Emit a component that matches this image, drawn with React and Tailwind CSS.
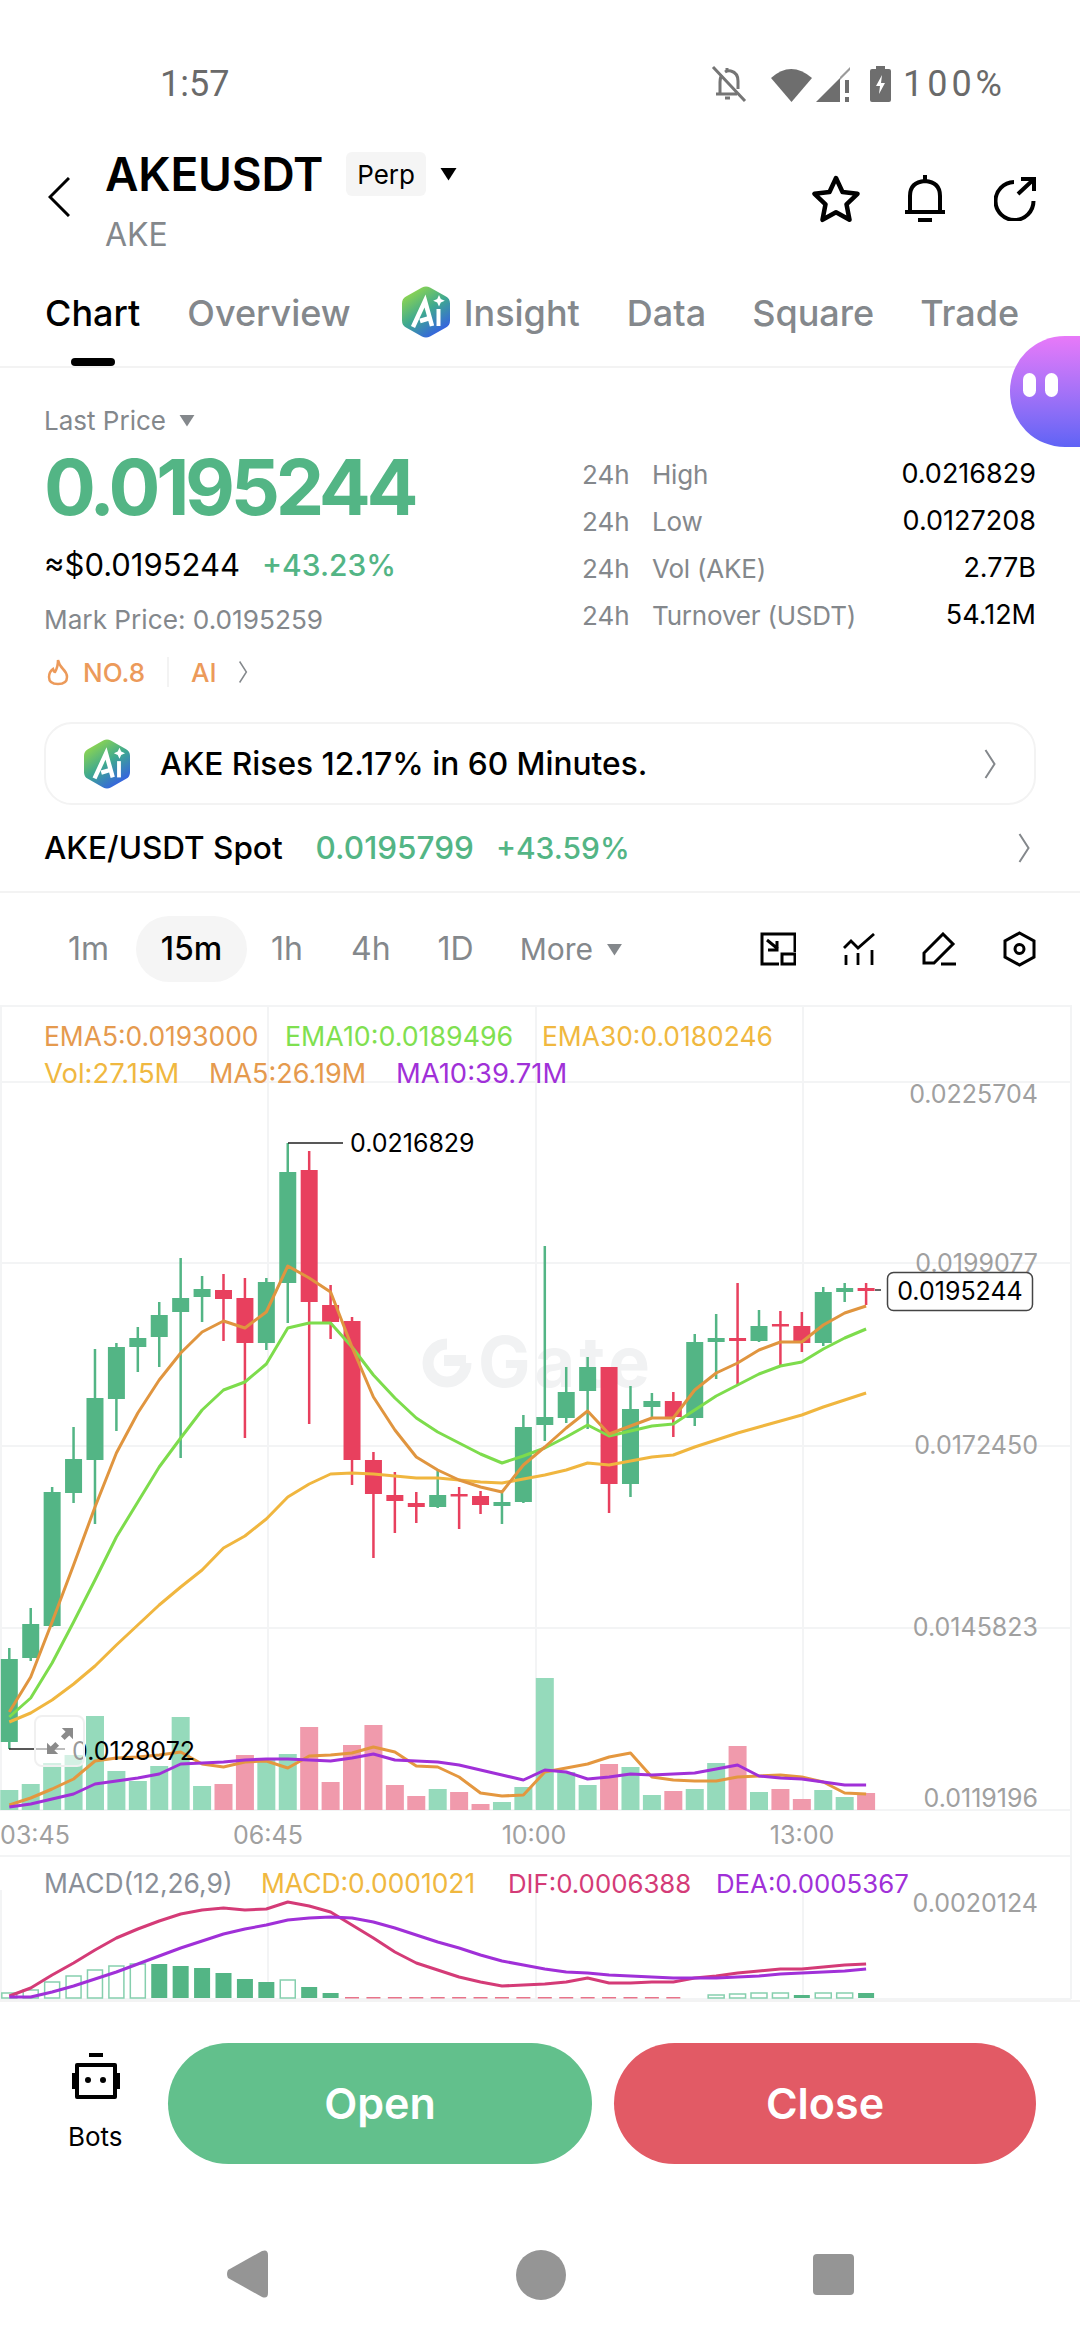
import React from "react";

const X = (i) => 9.3 + 21.42 * i;

// [high, bodyTop, bodyBottom, low, up]
const candles = [
  [1648, 1659, 1742, 1749, 1], [1608, 1624, 1658, 1661, 1], [1487, 1492, 1626, 1627, 1], [1427, 1459, 1493, 1503, 1],
  [1349, 1398, 1460, 1524, 1], [1343, 1347, 1399, 1431, 1], [1327, 1338, 1347, 1372, 1], [1302, 1315, 1337, 1367, 1],
  [1258, 1298, 1312, 1458, 1], [1276, 1289, 1297, 1322, 1], [1274, 1290, 1299, 1341, 0], [1278, 1298, 1343, 1438, 0],
  [1278, 1282, 1343, 1350, 1], [1143, 1172, 1283, 1323, 1], [1151, 1170, 1302, 1424, 0], [1285, 1305, 1322, 1339, 0],
  [1317, 1321, 1460, 1485, 0], [1452, 1460, 1494, 1558, 0], [1472, 1495, 1501, 1533, 0], [1492, 1503, 1507, 1523, 0],
  [1470, 1495, 1507, 1508, 1], [1487, 1494, 1496, 1529, 0], [1491, 1496, 1505, 1514, 0], [1493, 1502, 1506, 1524, 1],
  [1415, 1427, 1502, 1503, 1], [1246, 1417, 1425, 1441, 1], [1367, 1392, 1418, 1423, 1], [1357, 1367, 1391, 1429, 1],
  [1367, 1367, 1484, 1513, 0], [1386, 1409, 1484, 1497, 1], [1393, 1401, 1407, 1417, 1], [1392, 1401, 1417, 1437, 0],
  [1334, 1342, 1418, 1426, 1], [1314, 1338, 1342, 1379, 1], [1283, 1338, 1341, 1384, 0], [1310, 1326, 1341, 1342, 1],
  [1311, 1324, 1326, 1366, 0], [1312, 1326, 1343, 1352, 0], [1287, 1292, 1343, 1346, 1], [1283, 1288, 1292, 1302, 1],
  [1283, 1288, 1291, 1305, 0],
];

const ema5 = [1712, 1677, 1622, 1565, 1507, 1453, 1413, 1380, 1353, 1332, 1321, 1328, 1312, 1266, 1278, 1292, 1347, 1397, 1430, 1457, 1470, 1480, 1487, 1492, 1465, 1447, 1428, 1411, 1434, 1426, 1418, 1418, 1390, 1373, 1363, 1350, 1342, 1342, 1325, 1313, 1306];
const ema10 = [1717, 1698, 1663, 1622, 1580, 1537, 1502, 1467, 1438, 1410, 1390, 1382, 1364, 1328, 1323, 1323, 1347, 1375, 1398, 1418, 1432, 1443, 1454, 1463, 1456, 1448, 1437, 1425, 1436, 1431, 1426, 1424, 1410, 1396, 1385, 1374, 1366, 1362, 1349, 1338, 1329];
const ema30 = [1722, 1713, 1700, 1684, 1666, 1645, 1625, 1605, 1587, 1570, 1548, 1536, 1519, 1497, 1484, 1474, 1473, 1474, 1476, 1478, 1478, 1480, 1482, 1483, 1479, 1475, 1470, 1463, 1465, 1461, 1457, 1455, 1447, 1440, 1433, 1427, 1421, 1415, 1407, 1400, 1393];

// [top, up]
const volumes = [
  [1790, 1], [1784, 1], [1763, 1], [1755, 1], [1716, 1], [1771, 1], [1781, 1], [1766, 1], [1717, 1], [1786, 1],
  [1784, 0], [1755, 0], [1760, 1], [1754, 1], [1727, 0], [1782, 0], [1745, 0], [1725, 0], [1785, 0], [1796, 0],
  [1789, 1], [1792, 0], [1804, 0], [1802, 1], [1787, 1], [1678, 1], [1772, 1], [1785, 1], [1764, 0], [1767, 1],
  [1795, 1], [1791, 0], [1789, 1], [1763, 1], [1746, 0], [1792, 1], [1789, 0], [1799, 0], [1790, 1], [1797, 1], [1793, 0],
];
const volMa5 = [1805, 1798, 1789, 1779, 1761, 1758, 1757, 1755, 1752, 1764, 1767, 1762, 1761, 1768, 1756, 1755, 1753, 1747, 1752, 1766, 1767, 1777, 1793, 1796, 1795, 1772, 1768, 1764, 1757, 1753, 1777, 1780, 1781, 1781, 1777, 1776, 1775, 1777, 1782, 1793, 1794];
const volMa10 = [1807, 1804, 1799, 1794, 1784, 1781, 1778, 1774, 1764, 1763, 1762, 1760, 1759, 1759, 1760, 1761, 1758, 1754, 1760, 1761, 1762, 1765, 1770, 1775, 1780, 1770, 1772, 1779, 1777, 1774, 1775, 1774, 1773, 1769, 1765, 1776, 1778, 1779, 1782, 1785, 1785];

// [top, solid]
const macdBars = [
  [1993, 0], [1990, 0], [1982, 0], [1976, 0], [1970, 0], [1966, 0], [1964, 0], [1964, 1], [1966, 1], [1968, 1],
  [1973, 1], [1979, 1], [1982, 1], [1980, 0], [1987, 1], [1993, 1],
];
const macdTail = [[1995, 0], [1994, 0], [1993, 0], [1993, 0], [1995, 1], [1993, 0], [1993, 0], [1993, 1]];
const dif = [1996, 1988, 1975, 1963, 1950, 1938, 1929, 1921, 1914, 1910, 1908, 1910, 1909, 1902, 1906, 1912, 1925, 1938, 1952, 1963, 1970, 1977, 1982, 1986, 1985, 1984, 1982, 1978, 1983, 1983, 1982, 1982, 1978, 1976, 1973, 1971, 1969, 1969, 1967, 1965, 1964];
const dea = [1997, 1997, 1992, 1986, 1979, 1972, 1964, 1956, 1948, 1941, 1934, 1929, 1925, 1920, 1918, 1917, 1918, 1922, 1928, 1935, 1942, 1948, 1955, 1961, 1965, 1969, 1972, 1973, 1975, 1976, 1977, 1978, 1978, 1978, 1977, 1976, 1974, 1973, 1972, 1971, 1969];

const pts = (arr) => arr.map((y, i) => `${X(i).toFixed(1)},${y}`).join(" ");

function Line({ data, color, width = 3 }) {
  return <polyline points={pts(data)} fill="none" stroke={color} strokeWidth={width} strokeLinejoin="round" />;
}

function Caret({ className }) {
  return (
    <svg className={className} viewBox="0 0 18 14">
      <path d="M1 1h16L9 13.5z" fill="currentColor" />
    </svg>
  );
}

function Chevron({ className }) {
  return (
    <svg className={className} viewBox="0 0 12 32" fill="none" stroke="currentColor" strokeWidth="2">
      <path d="M1.5 2l9 14-9 14" />
    </svg>
  );
}

function AiBadge({ id, className }) {
  return (
    <svg className={className} viewBox="0 0 48 52">
      <defs>
        <linearGradient id={id} x1="0.15" y1="0.1" x2="0.7" y2="0.95">
          <stop offset="0" stopColor="#8fd64f" />
          <stop offset="0.5" stopColor="#3fa98f" />
          <stop offset="1" stopColor="#3563e0" />
        </linearGradient>
      </defs>
      <path d="M20 1.5q4-2 8 0l16 9q4 2 4 7v17q0 5-4 7l-16 9q-4 2-8 0l-16-9q-4-2-4-7v-17q0-5 4-7z" fill={`url(#${id})`} />
      <path d="M11 41L23 15l7 25M18 35l10-3" fill="none" stroke="#fff" strokeWidth="4.500" />
      <path d="M36.500 23v17" fill="none" stroke="#fff" strokeWidth="4" />
      <path d="M37 9l1.800 4 4 1.800-4 1.800-1.800 4-1.800-4-4-1.800 4-1.800z" fill="#fff" />
    </svg>
  );
}

function StatusBar() {
  return (
    <div className="h-[125px] flex items-end justify-between pl-[160px] pr-[74px] pb-[21px] text-[#6a6a6a]">
      <span className="text-[36px] leading-[40px] font-['Roboto',sans-serif]">1:57</span>
      <div className="flex items-center">
        <svg className="w-[36px] h-[38px] mr-[24px]" viewBox="0 0 36 38" fill="none" stroke="#757575" strokeWidth="3">
          <path d="M9 28V17q0-5 2-7M14 7q3-2 6-1 7 2 7 10v8" />
          <path d="M5 29h21M16 3v3M14 33h5M2 2l32 34" />
        </svg>
        <svg className="w-[41px] h-[35px] mr-[4px]" viewBox="0 0 41 35">
          <path d="M0 11Q20-7 41 11L20.500 35z" fill="#6e6e6e" />
        </svg>
        <svg className="w-[34px] h-[35px] mr-[20px]" viewBox="0 0 34 35">
          <path d="M0 35L24 11v24z" fill="#6e6e6e" />
          <path d="M24 10L34 0v3l-10 10z" fill="#9a9a9a" />
          <path d="M29 13h4v13h-4zM29 30h4v5h-4z" fill="#6e6e6e" />
        </svg>
        <svg className="w-[21px] h-[36px] mr-[12px]" viewBox="0 0 21 36">
          <path d="M6 0h9v3h4q2 0 2 2v29q0 2-2 2H2q-2 0-2-2V5q0-2 2-2h4z" fill="#6e6e6e" />
          <path d="M12 9l-6 11h4l-1 8 6-11h-4z" fill="#fff" />
        </svg>
        <span className="text-[36px] leading-[40px] tracking-[4px] font-['Roboto',sans-serif]">100%</span>
      </div>
    </div>
  );
}

function Header() {
  return (
    <div className="h-[137px] flex pl-[48px] pr-[44px]">
      <svg className="w-[22px] h-[40px] mt-[52px] mr-[35px] shrink-0" viewBox="0 0 22 40" fill="none" stroke="#000" strokeWidth="3">
        <path d="M21 1L2 20l19 19" />
      </svg>
      <div className="flex-1 pt-[24px]">
        <div className="flex items-center h-[50px]">
          <span className="text-[46px] leading-[50px] font-semibold text-black tracking-[-0.2px]">AKEUSDT</span>
          <span className="ml-[23px] px-[11px] h-[44px] flex items-center bg-[#f5f5f5] rounded-[6px] text-[26px]">Perp</span>
          <Caret className="w-[19px] h-[14px] ml-[13px] text-black" />
        </div>
        <div className="mt-[18px] text-[32px] leading-[36px] text-[#84888c]">AKE</div>
      </div>
      <div className="flex items-center pt-[10px]">
        <svg className="w-[48px] h-[48px]" viewBox="0 0 48 48" fill="none" stroke="#000" strokeWidth="4.500" strokeLinejoin="round">
          <path d="M24 3l6.500 14 15 1.800-11 10.500 3 15.500L24 37.200 10.500 44.800l3-15.500-11-10.500 15-1.800z" />
        </svg>
        <svg className="w-[40px] h-[48px] ml-[45px]" viewBox="0 0 40 48" fill="none" stroke="#000" strokeWidth="4">
          <path d="M5 36V21Q5 7 20 6q15 1 15 15v15M0 37h40" />
          <path d="M20 0v6M13 45h14" />
        </svg>
        <svg className="w-[42px] h-[44px] ml-[49px]" viewBox="0 0 42 44" fill="none" stroke="#000" strokeWidth="4">
          <path d="M20 5A19 19 0 1 0 39.500 24" />
          <path d="M24 17L39 3M27 2h13v12" />
        </svg>
      </div>
    </div>
  );
}

function Tabs() {
  return (
    <div className="h-[106px] border-b-[2px] border-[#f3f3f3] relative flex items-start pl-[45px] pt-[29px] text-[36px] leading-[44px] text-[#84888c] font-medium">
      <span className="text-black">Chart</span>
      <span className="ml-[47px]">Overview</span>
      <AiBadge id="tabAi" className="w-[48px] h-[52px] ml-[51px] -mt-[5px] shrink-0" />
      <span className="ml-[14px]">Insight</span>
      <span className="ml-[47px]">Data</span>
      <span className="ml-[46px]">Square</span>
      <span className="ml-[46px]">Trade</span>
      <div className="absolute left-[71px] bottom-0 w-[44px] h-[8px] bg-black rounded-full" />
    </div>
  );
}

function Stat({ label, value }) {
  return (
    <div className="h-[47px] flex items-center text-[26px]">
      <span className="w-[70px] text-[#84888c]">24h</span>
      <span className="text-[#84888c] tracking-[-0.2px]">{label}</span>
      <span className="ml-auto text-black text-[27px]">{value}</span>
    </div>
  );
}

function PriceInfo() {
  return (
    <div className="h-[525px] px-[44px] border-b-[2px] border-[#f3f3f3]">
      <div className="h-[339px] flex">
        <div className="w-[538px]">
          <div className="flex items-center mt-[36px] h-[32px] text-[26px] text-[#84888c]">
            Last Price
            <Caret className="w-[18px] h-[13px] ml-[12px] text-[#84888c]" />
          </div>
          <div className="mt-[16px] h-[70px] text-[77px] leading-[70px] font-bold text-[#53b585] tracking-[-4.3px]">0.0195244</div>
          <div className="mt-[21px] h-[44px] flex items-center text-[31px]">
            <span className="text-black">≈$0.0195244</span>
            <span className="ml-[22px] text-[30px] text-[#53b585] font-medium">+43.23%</span>
          </div>
          <div className="mt-[13px] text-[26.2px] leading-[40px] text-[#84888c]">Mark Price: 0.0195259</div>
          <div className="mt-[14px] h-[36px] flex items-center text-[26px] font-medium text-[#ec9a5a]">
            <svg className="w-[22px] h-[28px] ml-[3px] mr-[14px]" viewBox="0 0 22 28" fill="none" stroke="#ec9a5a" strokeWidth="2.500">
              <path d="M11 2q1 5 5 9 4 4 4 8 0 7-9 7t-9-7q0-5 4-8 1 3 2 3 3-5 3-12z" />
            </svg>
            <span>NO.8</span>
            <div className="w-[2px] h-[30px] bg-[#f3f3f3] ml-[22px] mr-[22px]" />
            <span>AI</span>
            <Chevron className="w-[12px] h-[24px] ml-[20px] text-[#84888c]" />
          </div>
        </div>
        <div className="flex-1 pt-[83px]">
          <Stat label="High" value="0.0216829" />
          <Stat label="Low" value="0.0127208" />
          <Stat label="Vol (AKE)" value="2.77B" />
          <Stat label="Turnover (USDT)" value="54.12M" />
        </div>
      </div>
      <div className="mt-[15px] h-[83px] border-[2px] border-[#f3f3f3] rounded-[28px] flex items-center pl-[38px] pr-[38px]">
        <AiBadge id="bannerAi" className="w-[46px] h-[50px] shrink-0" />
        <span className="ml-[30px] text-[31.7px] font-medium text-black">AKE Rises 12.17% in 60 Minutes.</span>
        <Chevron className="w-[12px] h-[32px] ml-auto text-[#84888c]" />
      </div>
      <div className="h-[86px] flex items-center text-[31.5px] font-medium">
        <span className="text-black">AKE/USDT Spot</span>
        <span className="ml-[33px] text-[#53b585]">0.0195799</span>
        <span className="ml-[22px] text-[30px] text-[#53b585]">+43.59%</span>
        <Chevron className="w-[12px] h-[32px] ml-auto mr-[6px] text-[#84888c]" />
      </div>
    </div>
  );
}

function Intervals() {
  return (
    <div className="h-[112px] flex items-center pl-[68px] pr-[44px] text-[32px] text-[#84888c]">
      <span>1m</span>
      <span className="ml-[27px] w-[111px] h-[66px] rounded-full bg-[#f5f5f5] text-black font-medium flex items-center justify-center">15m</span>
      <span className="ml-[24px]">1h</span>
      <span className="ml-[48px]">4h</span>
      <span className="ml-[47px]">1D</span>
      <span className="ml-[46px] text-[30px]">More</span>
      <Caret className="w-[17px] h-[13px] ml-[13px] text-[#84888c]" />
      <div className="ml-auto flex items-center gap-[47px] text-black">
        <svg className="w-[36px] h-[34px]" viewBox="0 0 36 34" fill="none" stroke="#000" strokeWidth="3">
          <path d="M19 32H2V2h33v18M7 8l11 9M17 9v9H8" />
          <path d="M22 22h13v10H22z" />
        </svg>
        <svg className="w-[32px] h-[32px]" viewBox="0 0 32 32" fill="none" stroke="#000" strokeWidth="2.800">
          <path d="M1 15l7-7 7 7L31 1M3 22v10M15 20v12M29 17v15" />
        </svg>
        <svg className="w-[34px] h-[34px]" viewBox="0 0 34 34" fill="none" stroke="#000" strokeWidth="3">
          <path d="M21 2l10 10-19 19H2V21zM19 32h15" />
        </svg>
        <svg className="w-[33px] h-[36px]" viewBox="0 0 33 36" fill="none" stroke="#000" strokeWidth="3">
          <path d="M16.500 2L31 10v16l-14.500 8L2 26V10z" />
          <circle cx="16.500" cy="18" r="4.500" />
        </svg>
      </div>
    </div>
  );
}

function Chart() {
  const t = { fontSize: 25 };
  return (
    <div className="relative h-[995px] overflow-hidden">
      <svg className="block font-['Inter',sans-serif]" width="1080" height="995" viewBox="0 1005 1080 995">
        {/* grid */}
        <g stroke="#f3f4f5" strokeWidth="2">
          <path d="M0 1006H1071M0 1082H1071M0 1263H1071M0 1446H1071M0 1628H1071M0 1810H1071M0 1856H1071M0 1999H1071" />
          <path d="M1 1005V1810M268 1005V1810M536 1005V1810M803 1005V1810M1071 1005V1999" />
          <path d="M1 1890V1999M268 1890V1999M536 1890V1999M803 1890V1999" />
        </g>

        {/* watermark */}
        <g fill="none" stroke="#f1f2f3" strokeWidth="11">
          <path d="M447 1344A19 19 0 1 0 466 1363" />
        </g>
        <rect x="444" y="1355" width="22" height="11" fill="#f1f2f3" />
        <text x="478" y="1387" fill="#f1f2f3" fontSize="70" fontWeight="700" letterSpacing="4">Gate</text>

        {/* volume */}
        {volumes.map(([top, up], i) => (
          <rect key={i} x={X(i) - 9} y={top} width="18" height={1810 - top} fill={up ? "#95dabb" : "#f09aac"} />
        ))}
        <Line data={volMa5} color="#e4973f" />
        <Line data={volMa10} color="#a030d8" />

        {/* candles */}
        {candles.map(([h, top, bottom, l, up], i) => {
          const c = up ? "#53b585" : "#e8405e";
          return (
            <g key={i} fill={c}>
              <rect x={X(i) - 1.25} y={h} width="2.5" height={l - h} />
              <rect x={X(i) - 8.5} y={top} width="17" height={Math.max(bottom - top, 2.5)} />
            </g>
          );
        })}
        <Line data={ema30} color="#f0b63f" />
        <Line data={ema10} color="#7ddc4c" />
        <Line data={ema5} color="#e0953f" />

        {/* high / low markers */}
        <path d="M288 1143H343M9 1749H65" fill="none" stroke="#222" strokeWidth="1.500" />
        <text x="350" y="1152" fill="#000" {...t}>0.0216829</text>
        <text x="72" y="1760" fill="#000" {...t}>0.0128072</text>

        {/* price axis */}
        <g fill="#a0a0a0" textAnchor="end" {...t}>
          <text x="1038" y="1103">0.0225704</text>
          <text x="1038" y="1272">0.0199077</text>
          <text x="1038" y="1454">0.0172450</text>
          <text x="1038" y="1636">0.0145823</text>
          <text x="1038" y="1807">0.0119196</text>
          <text x="1038" y="1912">0.0020124</text>
        </g>

        {/* last price tag */}
        <path d="M875 1290H881" stroke="#333" strokeWidth="1.500" />
        <rect x="887.500" y="1272.500" width="145" height="38" rx="6" fill="#fff" stroke="#444" strokeWidth="1.500" />
        <text x="960" y="1300" textAnchor="middle" fill="#000" {...t}>0.0195244</text>

        {/* time axis */}
        <g fill="#a0a0a0" textAnchor="middle" {...t}>
          <text x="35" y="1844">03:45</text>
          <text x="268" y="1844">06:45</text>
          <text x="534" y="1844">10:00</text>
          <text x="802" y="1844">13:00</text>
        </g>

        {/* legends */}
        <g fontSize="26.4">
          <text x="44" y="1046" fill="#e59a4e">EMA5:0.0193000</text>
          <text x="285" y="1046" fill="#7fe050" fontSize="26.8">EMA10:0.0189496</text>
          <text x="542" y="1046" fill="#f0b840">EMA30:0.0180246</text>
          <text x="44" y="1083" fill="#f0b840" fontSize="27.4">Vol:27.15M</text>
          <text x="209" y="1083" fill="#e59a4e" fontSize="27">MA5:26.19M</text>
          <text x="396" y="1083" fill="#a030d8" fontSize="27.4">MA10:39.71M</text>
          <text x="44" y="1893" fill="#8a8f98">MACD(12,26,9)</text>
          <text x="261" y="1893" fill="#f0b840">MACD:0.0001021</text>
          <text x="508" y="1893" fill="#d43b77" fontSize="25.8">DIF:0.0006388</text>
          <text x="716" y="1893" fill="#a030d8" fontSize="25.8">DEA:0.0005367</text>
        </g>

        {/* macd */}
        {macdBars.map(([top, solid], i) =>
          solid ? (
            <rect key={i} x={X(i) - 8} y={top} width="16" height={1998 - top} fill="#53b585" />
          ) : (
            <rect key={i} x={X(i) - 7.5} y={top} width="15" height={1998 - top} fill="#fff" stroke="#86cfae" strokeWidth="1.500" />
          )
        )}
        {Array.from({ length: 16 }, (_, k) => (
          <rect key={k} x={X(k + 16) - 7} y="1997" width="14" height="1.500" fill="#e8738a" />
        ))}
        {macdTail.map(([top, solid], k) =>
          solid ? (
            <rect key={k} x={X(k + 33) - 8} y={top} width="16" height={1998 - top} fill="#53b585" />
          ) : (
            <rect key={k} x={X(k + 33) - 8} y={top} width="16" height={1998 - top} fill="#fff" stroke="#86cfae" strokeWidth="1.500" />
          )
        )}
        <Line data={dif} color="#d43b77" />
        <Line data={dea} color="#a030d8" />
      </svg>

      {/* reset zoom button */}
      <div className="absolute left-[34px] top-[710px] w-[51px] h-[52px] rounded-[8px] border-[2px] border-[#f0f0f0] bg-white/60 flex items-center justify-center">
        <svg className="w-[26px] h-[26px]" viewBox="0 0 28 28" fill="#8a8a8a">
          <path d="M28 0v12l-4-4-5 5-4-4 5-5-4-4zM0 28V16l4 4 5-5 4 4-5 5 4 4z" />
        </svg>
      </div>
    </div>
  );
}

function BottomBar() {
  return (
    <div className="h-[160px] flex items-start pl-[64px] pr-[44px] pt-[41px]">
      <div className="w-[104px] shrink-0 pl-[4px] flex flex-col">
        <svg className="w-[48px] h-[46px] ml-[4px] mt-[10px]" viewBox="0 0 48 46" fill="none" stroke="#000" strokeWidth="4">
          <path d="M5 12h38v32H5z" strokeLinejoin="round" />
          <path d="M17 2h14M2 20v16M46 20v16" />
          <circle cx="16" cy="27" r="3" fill="#000" stroke="none" />
          <circle cx="31" cy="27" r="3" fill="#000" stroke="none" />
        </svg>
        <span className="mt-[22px] text-[26px] leading-[32px] text-black">Bots</span>
      </div>
      <div className="w-[424px] h-[121px] rounded-full bg-[#62c08c] text-white text-[43px] font-semibold flex items-center justify-center">Open</div>
      <div className="ml-[22px] w-[422px] h-[121px] rounded-full bg-[#e25a65] text-white text-[43px] font-semibold flex items-center justify-center">Close</div>
    </div>
  );
}

function NavBar() {
  return (
    <div className="flex-1 relative flex items-start pl-[226px] pt-[88px]">
      <svg className="w-[42px] h-[48px]" viewBox="0 0 42 48">
        <path d="M36 1q6-2 6 4v38q0 6-6 4L2 28q-2-4 0-8z" fill="#959595" />
      </svg>
      <div className="ml-[248px] w-[50px] h-[50px] rounded-full bg-[#959595]" />
      <div className="ml-[247px] mt-[4px] w-[41px] h-[41px] rounded-[4px] bg-[#959595]" />
    </div>
  );
}

export default function App() {
  return (
    <div className="relative w-[1080px] h-[2340px] bg-white overflow-hidden flex flex-col font-['Inter',sans-serif]">
      <StatusBar />
      <Header />
      <Tabs />
      <PriceInfo />
      <Intervals />
      <Chart />
      <div className="border-t-[2px] border-[#f3f3f3]" />
      <BottomBar />
      <NavBar />

      {/* floating assistant bubble */}
      <div className="absolute right-0 top-[336px] w-[70px] h-[111px] rounded-l-[55px] bg-gradient-to-b from-[#e879f9] to-[#5f63f5] flex items-start gap-[9px] pl-[13px] pt-[37px]">
        <div className="w-[13px] h-[24px] bg-white rounded-full" />
        <div className="w-[13px] h-[24px] bg-white rounded-full" />
      </div>
    </div>
  );
}
